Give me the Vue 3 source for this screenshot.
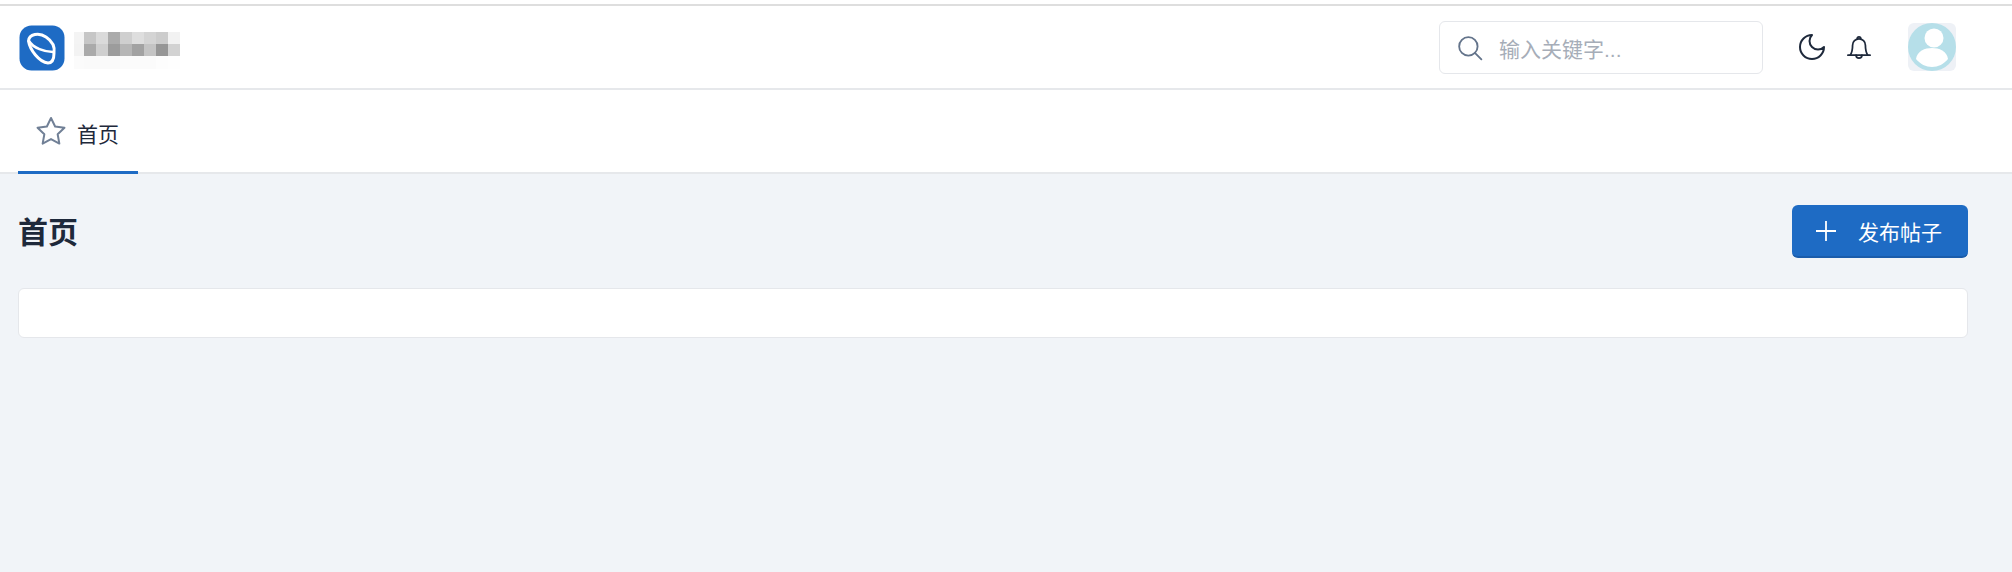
<template>
  <div class="page">
    <div class="top-line"></div>
    <header class="header">
      <div class="brand">
        <svg class="logo" viewBox="0 0 46 46" width="46" height="46">
          <rect x="0.5" y="0.5" width="45" height="45" rx="12" fill="#1e6bc4" />
          <g fill="none" stroke="#fff" stroke-linecap="round" stroke-linejoin="round">
            <path stroke-width="3" d="M9.500 16C10 9 20 7 27 12C33 16 36 22 35 28C35 34 33 38 29 38C20 37 11 25 9.500 16Z" />
            <path stroke-width="2.600" d="M10 16C14 23 26 27 34 27" />
          </g>
        </svg>
        <div class="mosaic">
          <span v-for="(c, i) in mosaic" :key="i" :style="{ background: c }"></span>
        </div>
      </div>
      <div class="header-right">
        <div class="search">
          <svg viewBox="0 0 24 24" width="26" height="26" fill="none" stroke="#64748b" stroke-width="1.700" stroke-linecap="round">
            <circle cx="10.500" cy="10.500" r="8.500" />
            <path d="M16.500 16.500l6 6" />
          </svg>
          <span class="placeholder">输入关键字...</span>
        </div>
        <svg class="moon" viewBox="0 0 24 24" width="32" height="32" fill="none" stroke="#1e293b" stroke-width="1.500" stroke-linejoin="round">
          <path d="M12 3a6 6 0 0 0 9 9 9 9 0 1 1-9-9Z" />
        </svg>
        <svg class="bell" viewBox="0 0 24 24" width="28" height="28" fill="none" stroke="#1e293b" stroke-width="1.500" stroke-linecap="round" stroke-linejoin="round">
          <path d="M2.500 19h19" />
          <path d="M4.500 19C6.500 16 6.500 13 6.500 10.500a5.500 5.500 0 0 1 11 0C17.500 13 17.500 16 19.500 19" />
          <path d="M10.500 4.800a1.500 1.500 0 1 1 3 0" />
          <path d="M9.500 19a2.500 2.500 0 0 0 5 0" />
        </svg>
        <svg class="avatar" viewBox="0 0 48 48" width="48" height="48">
          <rect width="48" height="48" rx="6" fill="#eef1f6" />
          <circle cx="24" cy="24" r="24" fill="#b6dfe9" />
          <circle cx="26" cy="15" r="9.500" fill="#fff" />
          <path d="M8 36C9 28 17 25 24 25C31 25 39 28 40 36C36 41 30 44 24 44C18 44 12 41 8 36Z" fill="#fff" />
        </svg>
      </div>
    </header>
    <nav class="tabs">
      <div class="tab">
        <svg viewBox="0 0 24 24" width="34" height="34" fill="none" stroke="#718096" stroke-width="1.400" stroke-linejoin="round">
          <path d="M12 2.800l2.900 6 6.600.9-4.800 4.600 1.200 6.600L12 17.700l-5.900 3.200 1.200-6.600-4.800-4.600 6.600-.9z" />
        </svg>
        <span>首页</span>
      </div>
    </nav>
    <main class="content">
      <div class="title-row">
        <h1>首页</h1>
        <button class="publish">
          <svg viewBox="0 0 20 20" width="20" height="20" stroke="#fff" stroke-width="1.800"><path d="M10 0v20M0 10h20" /></svg>
          <span>发布帖子</span>
        </button>
      </div>
      <div class="card"></div>
    </main>
  </div>
</template>

<script setup>
const mosaic = [
  '#f4f4f4', '#c6c6c6', '#dadada', '#ababab', '#cfcfcf', '#dedede', '#d4d4d4', '#cccccc', '#f2f2f2',
  '#f3f3f3', '#aaaaaa', '#cfcfcf', '#9c9c9c', '#b6b6b6', '#a2a2a2', '#c4c4c4', '#969696', '#d2d2d2',
  '#fbfbfb', '#fafafa', '#fafafa', '#fafafa', '#fbfbfb', '#fbfbfb', '#fbfbfb', '#fdfdfd', '#fefefe',
]
</script>

<style>
body {
  background: #f1f4f8;
}
</style>

<style scoped>
.page {
  height: 572px;
  background: #f1f4f8;
  font-family: "Liberation Sans", "Noto Sans CJK SC", sans-serif;
  color: #1e293b;
  overflow: hidden;
}
.top-line {
  height: 6px;
  background: #fff;
  border-bottom: 2px solid #dedede;
  box-sizing: border-box;
}
.header {
  height: 84px;
  background: #fff;
  border-bottom: 2px solid #e6e8eb;
  box-sizing: border-box;
  display: flex;
  align-items: center;
  justify-content: space-between;
  padding: 0 56px 0 19px;
}
.brand {
  display: flex;
  align-items: center;
  gap: 9px;
  margin-top: 1px;
}
.mosaic {
  display: grid;
  grid-template-columns: 10px repeat(8, 12px);
  grid-template-rows: 12px 12px 13px;
  margin-top: 5px;
}
.header-right {
  display: flex;
  align-items: center;
}
.search {
  width: 324px;
  height: 53px;
  box-sizing: border-box;
  border: 1px solid #e5e7eb;
  border-radius: 6px;
  display: flex;
  align-items: center;
  gap: 16px;
  padding-left: 17px;
  margin-right: 33px;
  margin-top: 1px;
}
.placeholder {
  font-size: 21px;
  color: #a6adb8;
}
.moon {
  margin-right: 17px;
}
.bell {
  margin-right: 35px;
}
.tabs {
  height: 84px;
  background: #fff;
  border-bottom: 2px solid #e6e8eb;
  box-sizing: border-box;
  padding-left: 18px;
  display: flex;
}
.tab {
  width: 120px;
  height: 84px;
  box-sizing: border-box;
  border-bottom: 3px solid #1e6bc4;
  display: flex;
  align-items: center;
  gap: 9px;
  padding-left: 16px;
  font-size: 21px;
  color: #1e293b;
}
.tab span {
  margin-top: 5px;
}
.content {
  padding: 31px 44px 0 18px;
}
.title-row {
  display: flex;
  align-items: center;
  justify-content: space-between;
  height: 53px;
}
h1 {
  margin: 0 0 4px;
  font-size: 30px;
  font-weight: 700;
  color: #1e293b;
}
.publish {
  width: 176px;
  height: 53px;
  border: 0;
  border-bottom: 2px solid #1a5cab;
  border-radius: 6px;
  background: #1e6bc4;
  color: #fff;
  font: inherit;
  font-size: 21px;
  display: flex;
  align-items: center;
  gap: 22px;
  padding: 0 0 0 24px;
}
.card {
  height: 50px;
  margin-top: 30px;
  background: #fff;
  border: 1px solid #e5e7eb;
  border-radius: 6px;
  box-sizing: border-box;
}
</style>
